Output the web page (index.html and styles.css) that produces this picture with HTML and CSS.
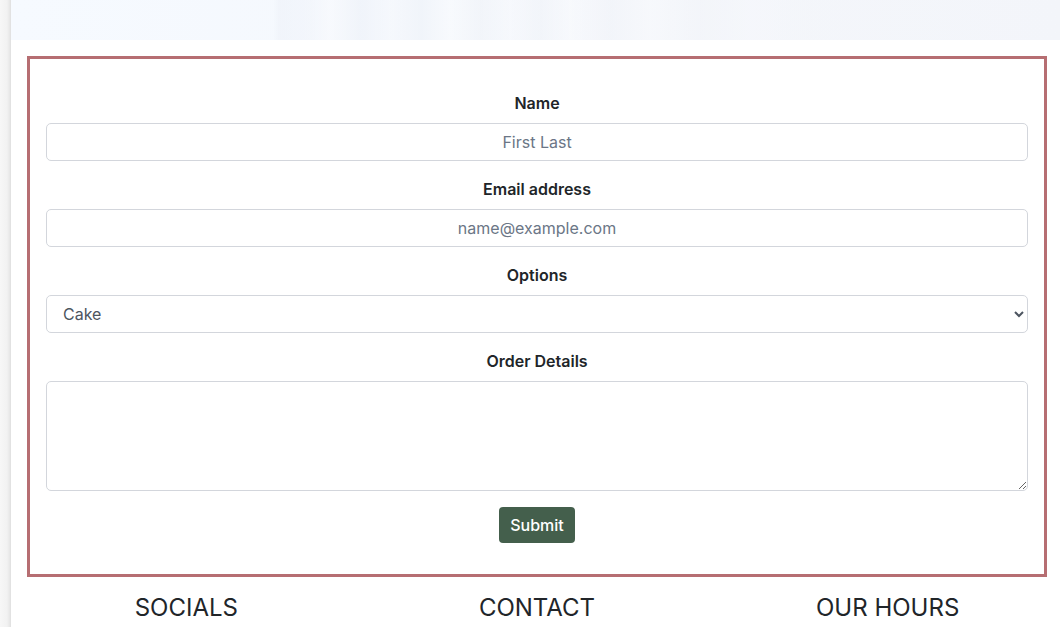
FILE: index.html
```html
<!DOCTYPE html>
<html lang="en">
<head>
<meta charset="utf-8">
<title>Order</title>
<link rel="stylesheet" href="styles.css">
</head>
<body>
<div class="page">
  <aside class="edge"></aside>
  <main class="main">
    <div class="banner"></div>
    <section class="order-box">
      <form class="order-form">
        <div class="field">
          <label class="field-label" for="name">Name</label>
          <input class="control" id="name" type="text" placeholder="First Last">
        </div>
        <div class="field">
          <label class="field-label" for="email">Email address</label>
          <input class="control" id="email" type="email" placeholder="name@example.com">
        </div>
        <div class="field">
          <label class="field-label" for="opts">Options</label>
          <select class="control select" id="opts">
            <option>Cake</option>
            <option>Cupcakes</option>
            <option>Cookies</option>
          </select>
        </div>
        <div class="field">
          <label class="field-label" for="details">Order Details</label>
          <textarea class="control area" id="details"></textarea>
        </div>
        <div class="actions">
          <button class="submit" type="button">Submit</button>
        </div>
      </form>
    </section>
    <footer class="footer">
      <h2 class="foot-title">SOCIALS</h2>
      <h2 class="foot-title">CONTACT</h2>
      <h2 class="foot-title">OUR HOURS</h2>
    </footer>
  </main>
</div>
</body>
</html>
```

FILE: styles.css
```css
html, body {
  margin: 0;
  padding: 0;
  overflow: hidden;
  background: #ffffff;
}
body {
  font-family: Inter, "Liberation Sans", sans-serif;
  color: #212529;
}
.page {
  display: flex;
  width: 1063px;
  min-height: 627px;
}
.edge {
  flex: 0 0 11px;
  background: linear-gradient(to right, #f7f7f7 0%, #f2f2f2 70%, #e6e6e6 100%);
  border-right: 1px solid #e2e2e2;
  box-sizing: border-box;
}
.main {
  flex: 1;
  display: flex;
  flex-direction: column;
}
.banner {
  height: 40px;
  background:
    linear-gradient(to right,
      rgba(255,255,255,0) 0px,
      rgba(255,255,255,0) 262px,
      rgba(238,242,249,0.6) 268px,
      rgba(241,244,250,0.5) 300px,
      rgba(250,251,253,0.5) 320px,
      rgba(237,241,248,0.6) 350px,
      rgba(246,248,252,0.5) 380px,
      rgba(238,242,248,0.6) 410px,
      rgba(251,252,254,0.5) 440px,
      rgba(240,243,248,0.6) 470px,
      rgba(248,249,252,0.5) 500px,
      rgba(240,243,248,0.6) 530px,
      rgba(250,251,253,0.5) 560px,
      rgba(241,243,248,0.6) 600px,
      rgba(249,250,252,0.5) 640px,
      rgba(242,244,248,0.6) 690px,
      rgba(246,247,251,0.5) 740px,
      rgba(243,245,249,0.4) 800px,
      rgba(255,255,255,0) 1052px),
    linear-gradient(to right, #f6faff, #f3f5fa);
}
.order-box {
  margin: 16px 16px 0;
  border: 3px solid #b66e72;
  padding: 32px 16px 31px;
}
.order-form {
  display: flex;
  flex-direction: column;
  gap: 16px;
}
.field {
  display: flex;
  flex-direction: column;
}
.field-label {
  font-size: 16px;
  font-weight: 600;
  line-height: 24px;
  text-align: center;
  margin-bottom: 8px;
  color: #212529;
}
.control {
  box-sizing: border-box;
  width: 100%;
  height: 38px;
  padding: 6px 12px;
  font-family: Inter, "Liberation Sans", sans-serif;
  font-size: 16px;
  line-height: 24px;
  color: #212529;
  background: #ffffff;
  border: 1px solid #d3d6dc;
  border-radius: 5px;
  text-align: center;
  outline: none;
}
.control::placeholder {
  color: #6b7686;
  opacity: 1;
}
.select {
  text-align: left;
  color: #4d5560;
}
.area {
  height: 110px;
  resize: vertical;
}
.actions {
  display: flex;
  justify-content: center;
}
.submit {
  font-family: Inter, "Liberation Sans", sans-serif;
  font-size: 16px;
  font-weight: 500;
  line-height: 24px;
  padding: 6px 11px;
  border: 0;
  border-radius: 4px;
  background: #445f4c;
  color: #ffffff;
}
.footer {
  display: grid;
  grid-template-columns: 1fr 1fr 1fr;
  padding-top: 16px;
}
.foot-title {
  margin: 0;
  text-align: center;
  font-size: 24px;
  font-weight: 400;
  line-height: 29px;
  color: #212529;
}
```
